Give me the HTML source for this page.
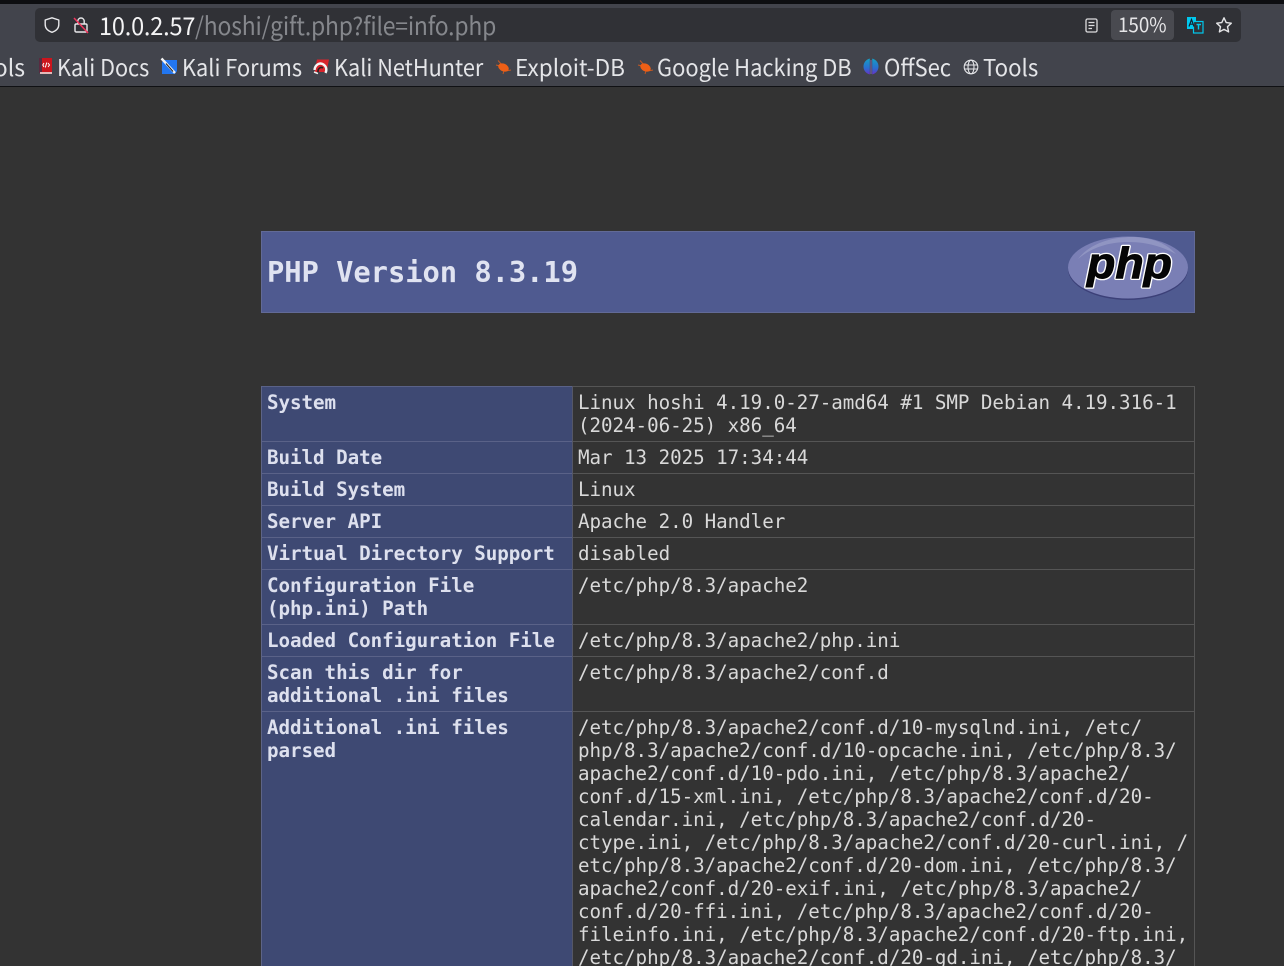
<!DOCTYPE html>
<html lang="en"><head><meta charset="utf-8"><title>phpinfo()</title>
<style>
html,body{margin:0;padding:0;width:1284px;height:966px;overflow:hidden;background:#333;}
#p{position:relative;width:1284px;height:966px;overflow:hidden;background:#333;}
.a{position:absolute;}
.ui{position:absolute;white-space:pre;font-family:"Noto Sans CJK JP","Liberation Sans",sans-serif;color:#e4e5e8;transform-origin:0 50%;}
.b{font-size:23px;line-height:30px;top:51px;height:30px;}
.t{position:absolute;white-space:pre;font-family:"DejaVu Sans Mono","Liberation Mono",monospace;font-size:19.2px;line-height:23px;letter-spacing:-.04px;}
.k{font-weight:bold;color:#dde0ee;left:267px;}
.v{color:#d9d9d9;left:578px;}
.h{position:absolute;height:1px;left:262px;width:310px;background:#5a6288;}
.g{position:absolute;height:1px;left:573px;width:621px;background:#555;}
</style></head><body><div id="p">

<!-- top strip and toolbar -->
<div class="a" style="left:0;top:0;width:1284px;height:4px;background:#0d0e11;"></div>
<div class="a" style="left:0;top:4px;width:1284px;height:82px;background:#42444c;"></div>
<div class="a" style="left:0;top:86px;width:1284px;height:1px;background:#101114;"></div>
<div class="a" style="left:35px;top:8px;width:1206px;height:34px;border-radius:5px;background:#303136;"></div>

<svg class="a" style="left:43px;top:16px" width="18" height="18" viewBox="0 0 18 18" fill="none"><path d="M9 1.8 L15.8 4 V8.5 C15.8 12.4 12.8 15 9 16.3 C5.2 15 2.2 12.4 2.2 8.5 V4 Z" stroke="#e8e8ea" stroke-width="1.4" stroke-linejoin="round"/></svg>
<svg class="a" style="left:72px;top:15px" width="18" height="20" viewBox="0 0 18 20" fill="none"><rect x="3" y="9" width="12" height="8" rx="1.2" stroke="#e8e8ea" stroke-width="1.4"/><path d="M5.8 9V6.2a3.2 3.2 0 0 1 6.4 0V9" stroke="#e8e8ea" stroke-width="1.4"/><path d="M2 3 L16 18" stroke="#f0345c" stroke-width="1.5"/></svg>

<div class="ui" style="left:99px;top:9px;font-size:24.5px;line-height:34px;color:#f4f4f5;letter-spacing:-.2px;transform:scaleX(.96)">10.0.2.57</div>
<div class="ui" style="left:195px;top:9px;font-size:24.5px;line-height:34px;color:#85878c;letter-spacing:-.2px;transform:scaleX(.935)">/hoshi/gift.php?file=info.php</div>

<svg class="a" style="left:1084px;top:17px" width="15" height="17" viewBox="0 0 15 17" fill="none"><rect x="2" y="2" width="11" height="13" rx="1.5" stroke="#dcdcde" stroke-width="1.3"/><path d="M4.5 5.5h6M4.5 8.5h6M4.5 11.5h3.5" stroke="#dcdcde" stroke-width="1.3"/></svg>
<div class="a" style="left:1111px;top:10px;width:63px;height:30px;border-radius:4px;background:#494a50;"></div>
<div class="ui" style="left:1118px;top:9px;font-size:20px;line-height:30px;color:#e6e6e8;transform:scaleX(.94)">150%</div>
<svg class="a" style="left:1186px;top:16px" width="18" height="18" viewBox="0 0 18 18"><rect x="1" y="1" width="9" height="12" fill="#00c8ee"/><rect x="7.5" y="5.500" width="9.500" height="11.500" fill="#303136" stroke="#00c8ee" stroke-width="1.200"/><path d="M3 10.500 L5.500 3.500 L8 10.500 M4 8.200h3" stroke="#123" stroke-width="1.200" fill="none"/><path d="M10.500 8.500h4.500M12.500 8.500v5" stroke="#00c8ee" stroke-width="1.400"/></svg>
<svg class="a" style="left:1215px;top:16px" width="18" height="18" viewBox="0 0 18 18" fill="none"><path d="M9 1.800 L11.200 6.600 L16.300 7.200 L12.500 10.700 L13.600 15.900 L9 13.300 L4.400 15.900 L5.500 10.700 L1.700 7.200 L6.800 6.600 Z" stroke="#e4e4e6" stroke-width="1.400" stroke-linejoin="round"/></svg>

<!-- bookmarks -->
<div class="ui b" style="left:-10px;width:35px;text-align:right">ols</div>

<svg class="a" style="left:38px;top:57px" width="15" height="19" viewBox="0 0 15 19"><rect x="1" y="1" width="13" height="14" fill="#cc151d"/><rect x="1" y="1" width="3" height="15" fill="#5a2a40"/><rect x="2" y="15" width="12" height="2" fill="#e3b9b9"/><path d="M6 6 L4.800 8 L6 10 M10 6 L11.500 8 L10 10 M8.800 5.500 L7.300 10.500" stroke="#fff" stroke-width="1" fill="none"/></svg>
<div class="ui b" style="left:57px;transform:scaleX(.94)">Kali Docs</div>

<svg class="a" style="left:160px;top:57px" width="18" height="19" viewBox="0 0 18 19"><path d="M4 3H17V14L15 17H2V5Z" fill="#2276f0"/><path d="M1.500 1.500 L8 8.500 L15 16" stroke="#f2f2f2" stroke-width="2.400" fill="none"/><path d="M6 6.500 L13 14.500" stroke="#222" stroke-width="1"/></svg>
<div class="ui b" style="left:182px;transform:scaleX(.945)">Kali Forums</div>

<svg class="a" style="left:313px;top:58px" width="17" height="18" viewBox="0 0 17 18"><path d="M4 1.500H16L13.500 14H1.500Z" fill="#d8242c"/><path d="M1.500 12 C2 6.500 7 4 10.500 6.500 C13.500 8.500 14 12 12.500 15" stroke="#f4f4f4" stroke-width="2.400" fill="none"/><path d="M5 14.500 C4.500 10.500 7.500 8.500 10 10" stroke="#222" stroke-width="1.600" fill="none"/><path d="M1 14 L5 15.500" stroke="#eee" stroke-width="1.500"/></svg>
<div class="ui b" style="left:334px;transform:scaleX(.943)">Kali NetHunter</div>

<svg class="a" style="left:495px;top:59px" width="17" height="16" viewBox="0 0 17 16"><ellipse cx="8.500" cy="8.500" rx="5.500" ry="3.800" transform="rotate(25 8.500 8.500)" fill="#ee5f16"/><path d="M1 6 L5 7 M3 1.500 L7 6 M11 12 L16 11 M9 12 L8 15" stroke="#ee5f16" stroke-width="1" opacity=".75"/></svg>
<div class="ui b" style="left:515px;transform:scaleX(.98)">Exploit-DB</div>

<svg class="a" style="left:637px;top:59px" width="17" height="16" viewBox="0 0 17 16"><ellipse cx="8.500" cy="8.500" rx="5.500" ry="3.800" transform="rotate(25 8.500 8.500)" fill="#ee5f16"/><path d="M1 6 L5 7 M3 1.500 L7 6 M11 12 L16 11 M9 12 L8 15" stroke="#ee5f16" stroke-width="1" opacity=".75"/></svg>
<div class="ui b" style="left:657px;transform:scaleX(.951)">Google Hacking DB</div>

<svg class="a" style="left:863px;top:58px" width="16" height="18" viewBox="0 0 16 18"><defs><linearGradient id="og" x1="0" y1="0" x2="0" y2="1"><stop offset="0" stop-color="#169fc4"/><stop offset=".6" stop-color="#2a6ed0"/><stop offset="1" stop-color="#6a30c8"/></linearGradient></defs><ellipse cx="8" cy="8.500" rx="7.500" ry="8" fill="url(#og)"/><path d="M8 0V17" stroke="#42444c" stroke-width="2.400"/><path d="M8 2V16" stroke="#8a70d0" stroke-width=".8"/></svg>
<div class="ui b" style="left:884px;transform:scaleX(.957)">OffSec</div>

<svg class="a" style="left:963px;top:59px" width="16" height="16" viewBox="0 0 16 16" fill="none" stroke="#e4e5e8" stroke-width="1.100"><circle cx="8" cy="8" r="6.800"/><ellipse cx="8" cy="8" rx="3" ry="6.800"/><path d="M1.200 6h13.600M1.200 10h13.600"/></svg>
<div class="ui b" style="left:983px;transform:scaleX(.965)">Tools</div>

<!-- PHP header -->
<div class="a" style="left:261px;top:231px;width:932px;height:80px;background:#4f5a90;border:1px solid #626a96;"></div>
<div class="t" style="left:267px;top:255px;font-size:28.8px;line-height:34px;font-weight:bold;color:#e0e3f1;letter-spacing:-.06px">PHP Version 8.3.19</div>
<svg class="a" style="left:1066px;top:234px" width="125" height="68" viewBox="0 0 125 68">
<ellipse cx="62" cy="35" rx="60" ry="31" fill="#3c4078"/>
<ellipse cx="62" cy="33.500" rx="60" ry="31" fill="#7a7fb5"/>
<path d="M12 25C25 8 48 3 66 3C85 3 100 9 110 20C95 12 80 8 62 8C42 8 25 14 12 25Z" fill="#9a9ec8" opacity=".7"/>
<text x="21" y="44" font-family="'Liberation Sans',sans-serif" font-style="italic" font-weight="bold" font-size="44" fill="#050505" stroke="#fff" stroke-width="3.600" paint-order="stroke" stroke-linejoin="round" textLength="85" lengthAdjust="spacingAndGlyphs">php</text>
<text x="21" y="44" font-family="'Liberation Sans',sans-serif" font-style="italic" font-weight="bold" font-size="44" fill="#050505" stroke="#050505" stroke-width="1" textLength="85" lengthAdjust="spacingAndGlyphs">php</text>
</svg>

<!-- info table -->
<div class="a" style="left:261px;top:386px;width:311px;height:580px;background:#3e4973;"></div>
<div class="a" style="left:261px;top:386px;width:311px;height:1px;background:#5a6288;"></div>
<div class="a" style="left:572px;top:386px;width:623px;height:1px;background:#555;"></div>
<div class="a" style="left:261px;top:386px;width:1px;height:580px;background:#5d6487;"></div>
<div class="a" style="left:572px;top:386px;width:1px;height:580px;background:#555766;"></div>
<div class="a" style="left:1194px;top:386px;width:1px;height:580px;background:#555;"></div>
<div class="h" style="top:441px"></div><div class="g" style="top:441px"></div>
<div class="h" style="top:473px"></div><div class="g" style="top:473px"></div>
<div class="h" style="top:505px"></div><div class="g" style="top:505px"></div>
<div class="h" style="top:537px"></div><div class="g" style="top:537px"></div>
<div class="h" style="top:569px"></div><div class="g" style="top:569px"></div>
<div class="h" style="top:624px"></div><div class="g" style="top:624px"></div>
<div class="h" style="top:656px"></div><div class="g" style="top:656px"></div>
<div class="h" style="top:711px"></div><div class="g" style="top:711px"></div>

<div class="t k" style="top:391px">System</div>
<div class="t v" style="top:391px">Linux hoshi 4.19.0-27-amd64 #1 SMP Debian 4.19.316-1
(2024-06-25) x86_64</div>
<div class="t k" style="top:446px">Build Date</div>
<div class="t v" style="top:446px">Mar 13 2025 17:34:44</div>
<div class="t k" style="top:478px">Build System</div>
<div class="t v" style="top:478px">Linux</div>
<div class="t k" style="top:510px">Server API</div>
<div class="t v" style="top:510px">Apache 2.0 Handler</div>
<div class="t k" style="top:542px">Virtual Directory Support</div>
<div class="t v" style="top:542px">disabled</div>
<div class="t k" style="top:574px">Configuration File
(php.ini) Path</div>
<div class="t v" style="top:574px">/etc/php/8.3/apache2</div>
<div class="t k" style="top:629px">Loaded Configuration File</div>
<div class="t v" style="top:629px">/etc/php/8.3/apache2/php.ini</div>
<div class="t k" style="top:661px">Scan this dir for
additional .ini files</div>
<div class="t v" style="top:661px">/etc/php/8.3/apache2/conf.d</div>
<div class="t k" style="top:716px">Additional .ini files
parsed</div>
<div class="t v" style="top:716px">/etc/php/8.3/apache2/conf.d/10-mysqlnd.ini, /etc/
php/8.3/apache2/conf.d/10-opcache.ini, /etc/php/8.3/
apache2/conf.d/10-pdo.ini, /etc/php/8.3/apache2/
conf.d/15-xml.ini, /etc/php/8.3/apache2/conf.d/20-
calendar.ini, /etc/php/8.3/apache2/conf.d/20-
ctype.ini, /etc/php/8.3/apache2/conf.d/20-curl.ini, /
etc/php/8.3/apache2/conf.d/20-dom.ini, /etc/php/8.3/
apache2/conf.d/20-exif.ini, /etc/php/8.3/apache2/
conf.d/20-ffi.ini, /etc/php/8.3/apache2/conf.d/20-
fileinfo.ini, /etc/php/8.3/apache2/conf.d/20-ftp.ini,
/etc/php/8.3/apache2/conf.d/20-gd.ini, /etc/php/8.3/</div>

</div></body></html>
